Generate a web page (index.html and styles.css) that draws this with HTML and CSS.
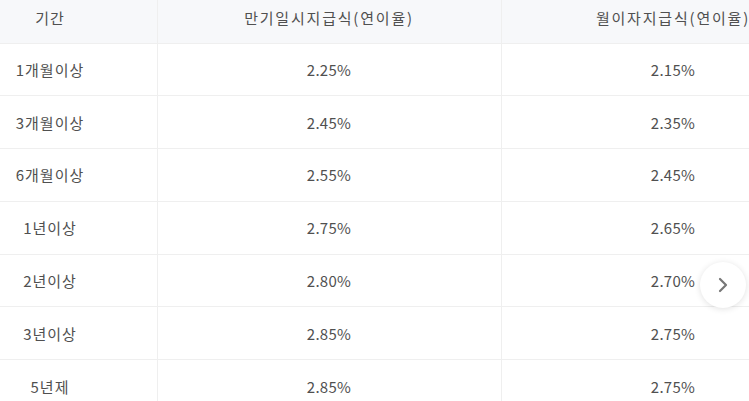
FILE: index.html
```html
<!DOCTYPE html>
<html>
<head>
<meta charset="utf-8">
<link rel="stylesheet" href="styles.css">
</head>
<body>

<div class="rate-wrap">
  <table class="rate-table">
    <colgroup>
      <col class="c-term">
      <col class="c-rate">
      <col class="c-rate">
    </colgroup>
    <thead>
      <tr>
        <th><span class="term">기간</span></th>
        <th>만기일시지급식(연이율)</th>
        <th>월이자지급식(연이율)</th>
      </tr>
    </thead>
    <tbody>
      <tr><td><span class="term">1개월이상</span></td><td>2.25%</td><td>2.15%</td></tr>
      <tr><td><span class="term">3개월이상</span></td><td>2.45%</td><td>2.35%</td></tr>
      <tr><td><span class="term">6개월이상</span></td><td>2.55%</td><td>2.45%</td></tr>
      <tr><td><span class="term">1년이상</span></td><td>2.75%</td><td>2.65%</td></tr>
      <tr><td><span class="term">2년이상</span></td><td>2.80%</td><td>2.70%</td></tr>
      <tr><td><span class="term">3년이상</span></td><td>2.85%</td><td>2.75%</td></tr>
      <tr><td><span class="term">5년제</span></td><td>2.85%</td><td>2.75%</td></tr>
    </tbody>
  </table>

  <!-- scroll right -->
  <a href="#" class="next-btn">
    <svg width="10" height="16" viewBox="0 0 10 16"><path d="M2 2 L8 8 L2 14" fill="none" stroke="#777" stroke-width="2.2" stroke-linecap="round" stroke-linejoin="round"/></svg>
  </a>
</div>

</body>
</html>
```

FILE: styles.css
```css
* {box-sizing: border-box;}
body {
    margin: 0;
    font-family: "Noto Sans CJK KR", "Noto Sans", sans-serif;
    background: #fff;
}

.rate-wrap {
    position: relative;
    width: 749px;
    height: 401px;
    overflow: hidden;
}

.rate-table {
    border-collapse: collapse;
    table-layout: fixed;
    width: 845px;
    font-size: 15px;
    color: #505050;
}

.c-term {width: 157px;}
.c-rate {width: 344px;}

.rate-table th,
.rate-table td {
    text-align: center;
    font-weight: normal;
    border-bottom: 1px solid #efefef;
    border-right: 1px solid #efefef;
    padding: 0;
    white-space: nowrap;
}

.rate-table th {
    height: 43px;
    background: #f7f8fa;
    padding-bottom: 8px;
    letter-spacing: 1.8px;
}

.rate-table td {
    height: 52.8px;
    padding-top: 0;
    letter-spacing: 0.3px;
}

.rate-table .term {
    display: block;
    width: 100px;
    letter-spacing: 1px;
}

.next-btn {
    position: absolute;
    left: 700px;
    top: 262px;
    width: 46px;
    height: 46px;
    border-radius: 50%;
    background: #fff;
    box-shadow: 0 1px 6px rgba(0,0,0,0.12);
    display: flex;
    align-items: center;
    justify-content: center;
}
```
